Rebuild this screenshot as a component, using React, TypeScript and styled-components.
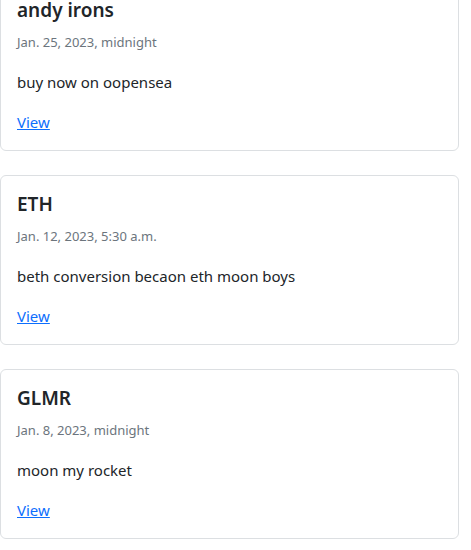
import React from "react";
import styled, { createGlobalStyle } from "styled-components";

const GlobalStyle = createGlobalStyle`
  html, body {
    margin: 0;
    padding: 0;
    background: #ffffff;
    font-family: "Noto Sans", "Open Sans", "Liberation Sans", sans-serif;
    color: #212529;
    overflow: hidden;
  }
`;

const List = styled.div`
  display: flex;
  flex-direction: column;
  gap: 24px;
  width: 459px;
  margin-top: -19px;
`;

const Card = styled.div`
  border: 1px solid #dcdfe2;
  border-radius: 6px;
  background: #fff;
  padding: 16px;
  display: flex;
  flex-direction: column;
`;

const Title = styled.h5`
  margin: 0 0 10px;
  font-size: 19px;
  line-height: 24px;
  font-weight: 600;
  color: #212529;
`;

const DateLine = styled.div`
  font-size: 13px;
  line-height: 21px;
  color: #6c757d;
  margin-bottom: 17px;
`;

const Text = styled.p`
  margin: 0 0 16px;
  font-size: 15px;
  line-height: 24px;
  color: #212529;
`;

const ViewLink = styled.a`
  font-size: 15px;
  line-height: 24px;
  color: #0d6efd;
  text-decoration: underline;
  align-self: flex-start;
`;

const posts = [
  { title: "andy irons", date: "Jan. 25, 2023, midnight", text: "buy now on oopensea" },
  { title: "ETH", date: "Jan. 12, 2023, 5:30 a.m.", text: "beth conversion becaon eth moon boys" },
  { title: "GLMR", date: "Jan. 8, 2023, midnight", text: "moon my rocket" },
];

export default function App() {
  return (
    <>
      <GlobalStyle />
      <List>
        {posts.map((p) => (
          <Card key={p.title}>
            <Title>{p.title}</Title>
            <DateLine>{p.date}</DateLine>
            <Text>{p.text}</Text>
            <ViewLink href="#">View</ViewLink>
          </Card>
        ))}
      </List>
    </>
  );
}
